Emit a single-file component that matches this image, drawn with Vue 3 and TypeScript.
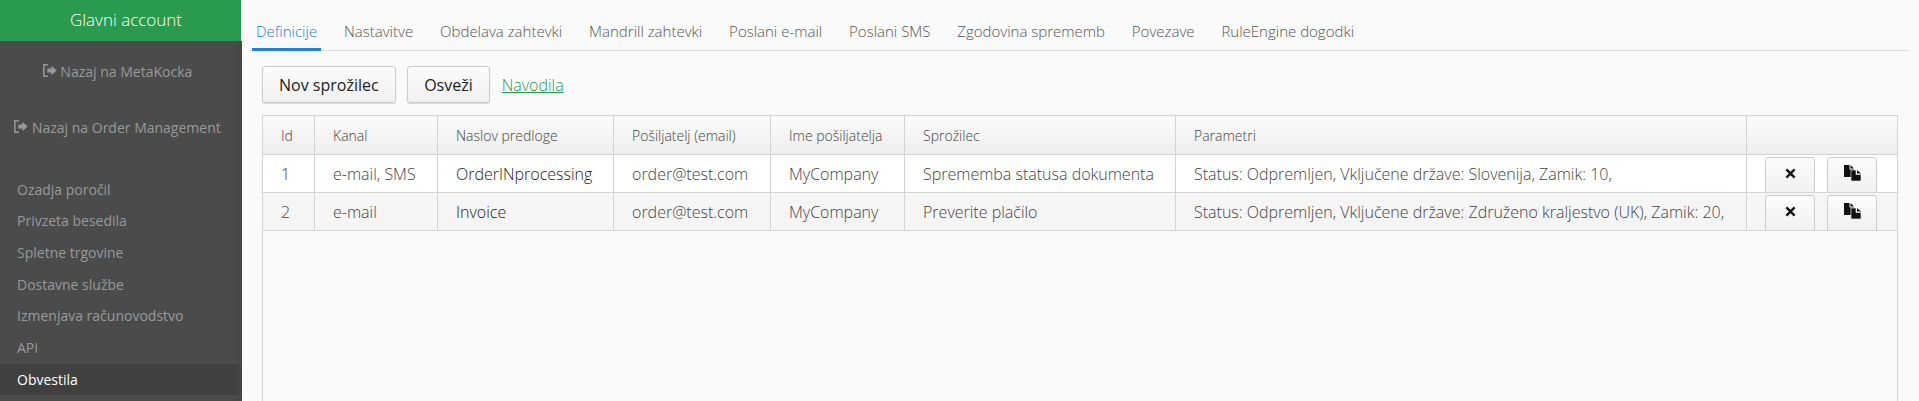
<template>
	<div class="page">
		<aside class="sidebar">
			<div class="account">Glavni account</div>
			<a class="back back-first"><svg class="out-icon" viewBox="0 0 14 14"><path d="M5.500 1H1v12h4.500V11.600H2.400V2.400H5.500z M5 5.200h3.800V2.600L13.600 7 8.800 11.400V8.800H5z" /></svg> Nazaj na MetaKocka</a>
			<a class="back back-second"><svg class="out-icon" viewBox="0 0 14 14"><path d="M5.500 1H1v12h4.500V11.600H2.400V2.400H5.500z M5 5.200h3.800V2.600L13.600 7 8.800 11.400V8.800H5z" /></svg> Nazaj na Order Management</a>
			<nav class="menu">
				<a v-for="item in menu" :key="item" class="menu-item" :class="{ active: item === 'Obvestila' }">{{ item }}</a>
			</nav>
		</aside>
		<main class="content">
			<div class="tabs">
				<a v-for="(tab, i) in tabs" :key="tab" class="tab" :class="{ current: i === 0 }">{{ tab }}</a>
			</div>
			<div class="toolbar">
				<button class="btn">Nov sprožilec</button>
				<button class="btn">Osveži</button>
				<a class="guide">Navodila</a>
			</div>
			<div class="table-box">
				<table>
					<colgroup>
						<col v-for="w in widths" :key="w" :style="{ width: w + 'px' }" />
					</colgroup>
					<thead>
						<tr>
							<th v-for="h in headers" :key="h">{{ h }}</th>
							<th></th>
						</tr>
					</thead>
					<tbody>
						<tr v-for="row in rows" :key="row.id">
							<td>{{ row.id }}</td>
							<td>{{ row.channel }}</td>
							<td class="title">{{ row.title }}</td>
							<td>{{ row.email }}</td>
							<td>{{ row.name }}</td>
							<td>{{ row.trigger }}</td>
							<td class="params">{{ row.params }}</td>
							<td class="actions">
								<div class="clip">
									<button class="small"><svg viewBox="0 0 12 12" class="x-icon"><path d="M2.400 .6 6 4.200 9.600 .6 11.400 2.400 7.800 6 11.400 9.600 9.600 11.400 6 7.800 2.400 11.400 .6 9.600 4.200 6 .6 2.400z" /></svg></button>
									<button class="small">
										<svg viewBox="0 0 17 16" class="dup-icon">
											<path d="M0 0H5.500V4.500H10V12H0z M6.500 0 10 3.500H6.500z" />
											<path class="front-page" d="M7 5H12V9.500H17V16H7z" />
											<path d="M13 5 17 8.500H13z" />
										</svg>
									</button>
								</div>
							</td>
						</tr>
					</tbody>
				</table>
			</div>
		</main>
	</div>
</template>

<script setup lang="ts">
const menu = [
	'Ozadja poročil',
	'Privzeta besedila',
	'Spletne trgovine',
	'Dostavne službe',
	'Izmenjava računovodstvo',
	'API',
	'Obvestila',
]

const tabs = [
	'Definicije',
	'Nastavitve',
	'Obdelava zahtevki',
	'Mandrill zahtevki',
	'Poslani e-mail',
	'Poslani SMS',
	'Zgodovina sprememb',
	'Povezave',
	'RuleEngine dogodki',
]

const widths = [52, 123, 176, 157, 134, 271, 571, 151]

const headers = ['Id', 'Kanal', 'Naslov predloge', 'Pošiljatelj (email)', 'Ime pošiljatelja', 'Sprožilec', 'Parametri']

const rows = [
	{
		id: 1,
		channel: 'e-mail, SMS',
		title: 'OrderINprocessing',
		email: 'order@test.com',
		name: 'MyCompany',
		trigger: 'Sprememba statusa dokumenta',
		params: 'Status: Odpremljen, Vključene države: Slovenija, Zamik: 10,',
	},
	{
		id: 2,
		channel: 'e-mail',
		title: 'Invoice',
		email: 'order@test.com',
		name: 'MyCompany',
		trigger: 'Preverite plačilo',
		params: 'Status: Odpremljen, Vključene države: Združeno kraljestvo (UK), Zamik: 20,',
	},
]
</script>

<style>
html,
body {
	margin: 0;
	height: 100%;
	overflow: hidden;
	background: #fafafa;
}
</style>

<style scoped>
.page {
	display: flex;
	height: 401px;
	overflow: hidden;
	font-family: 'Open Sans', sans-serif;
	color: #555;
}

.sidebar {
	flex: 0 0 242px;
	display: flex;
	flex-direction: column;
	background: linear-gradient(to right, #4b4b4b 96%, #464646 100%);
	color: #999;
	font-size: 14px;
}

.account {
	height: 41px;
	line-height: 40px;
	padding-left: 10px;
	background: linear-gradient(to right, #2a9a4e 241px, #fafafa 241px);
	color: #fff;
	text-align: center;
	font-size: 17px;
	font-weight: 300;
}

.back {
	display: block;
	padding-right: 8px;
	text-align: center;
	line-height: 20px;
}

.back-first {
	margin-top: 21px;
}

.back-second {
	margin-top: 36px;
}

.out-icon {
	width: 15px;
	height: 15px;
	fill: #999;
	vertical-align: -1px;
}

.menu {
	display: flex;
	flex-direction: column;
	margin-top: 35.6px;
}

.menu-item {
	height: 31.7px;
	line-height: 32px;
	padding-left: 17px;
}

.menu-item.active {
	background: linear-gradient(to right, #404040 97%, #464646 100%);
	color: #fff;
}

.content {
	flex: 1;
	min-width: 0;
	padding-left: 10px;
	padding-right: 10px;
}

.tabs {
	display: flex;
	height: 50px;
	border-bottom: 1px solid #ddd;
	box-sizing: border-box;
	margin-top: 1px;
	font-size: 15px;
	font-weight: 300;
}

.tab {
	padding: 0 4px;
	margin-right: 18.9px;
	line-height: 60px;
	height: 49px;
	color: #555;
}

.tab.current {
	color: #1e7ee6;
	border-bottom: 3px solid #1e7ee6;
	box-sizing: content-box;
	height: 47px;
}

.toolbar {
	display: flex;
	align-items: center;
	height: 37px;
	margin: 15px 0 12px 10px;
	gap: 11.5px;
}

.btn {
	height: 37px;
	padding: 0 16px;
	border: 1px solid #ccc;
	border-radius: 3px;
	background: linear-gradient(#fcfcfc, #f0f0f0);
	box-shadow: 0 1px 1px rgba(0, 0, 0, 0.15);
	font-family: inherit;
	font-size: 16px;
	color: #222;
}

.guide {
	margin-left: 0.5px;
	font-size: 16px;
	font-weight: 300;
	color: #2a9a4e;
	text-decoration: underline;
}

.table-box {
	height: 300px;
	width: 1636px;
	margin-left: 10px;
	border: 1px solid #d4d4d4;
	border-top: 0;
	box-sizing: border-box;
}

table {
	border-collapse: collapse;
	table-layout: fixed;
	width: 1635px;
	margin-left: -1px;
}

th {
	height: 38px;
	padding: 0 18px;
	border: 1px solid #d4d4d4;
	background: linear-gradient(#fbfbfb, #eeeeee);
	text-align: left;
	font-size: 14px;
	font-weight: 300;
	color: #444;
}

tr {
	height: 38px;
}

td {
	height: 37px;
	padding: 0 18px;
	border: 1px solid #d4d4d4;
	background: #fff;
	font-size: 16px;
	font-weight: 300;
	white-space: nowrap;
	overflow: hidden;
	color: #444;
}

tbody tr:nth-child(2) td {
	background: #f5f5f5;
}

td.title {
	color: #222;
}

td.actions {
	padding: 0;
	vertical-align: top;
}

.clip {
	display: flex;
	align-items: flex-start;
	height: 37px;
	gap: 12px;
	padding: 2px 0 0 18px;
	box-sizing: border-box;
	overflow: hidden;
}

.small {
	flex: 0 0 50px;
	height: 38px;
	padding: 0 0 4px;
	border: 1px solid #ccc;
	border-radius: 3px;
	background: linear-gradient(#fcfcfc, #f0f0f0);
}

.x-icon {
	width: 11px;
	height: 11px;
	fill: #111;
}

.dup-icon {
	width: 17px;
	height: 16px;
	fill: #111;
}

.front-page {
	stroke: #f6f6f6;
	stroke-width: 0.6;
}
</style>
